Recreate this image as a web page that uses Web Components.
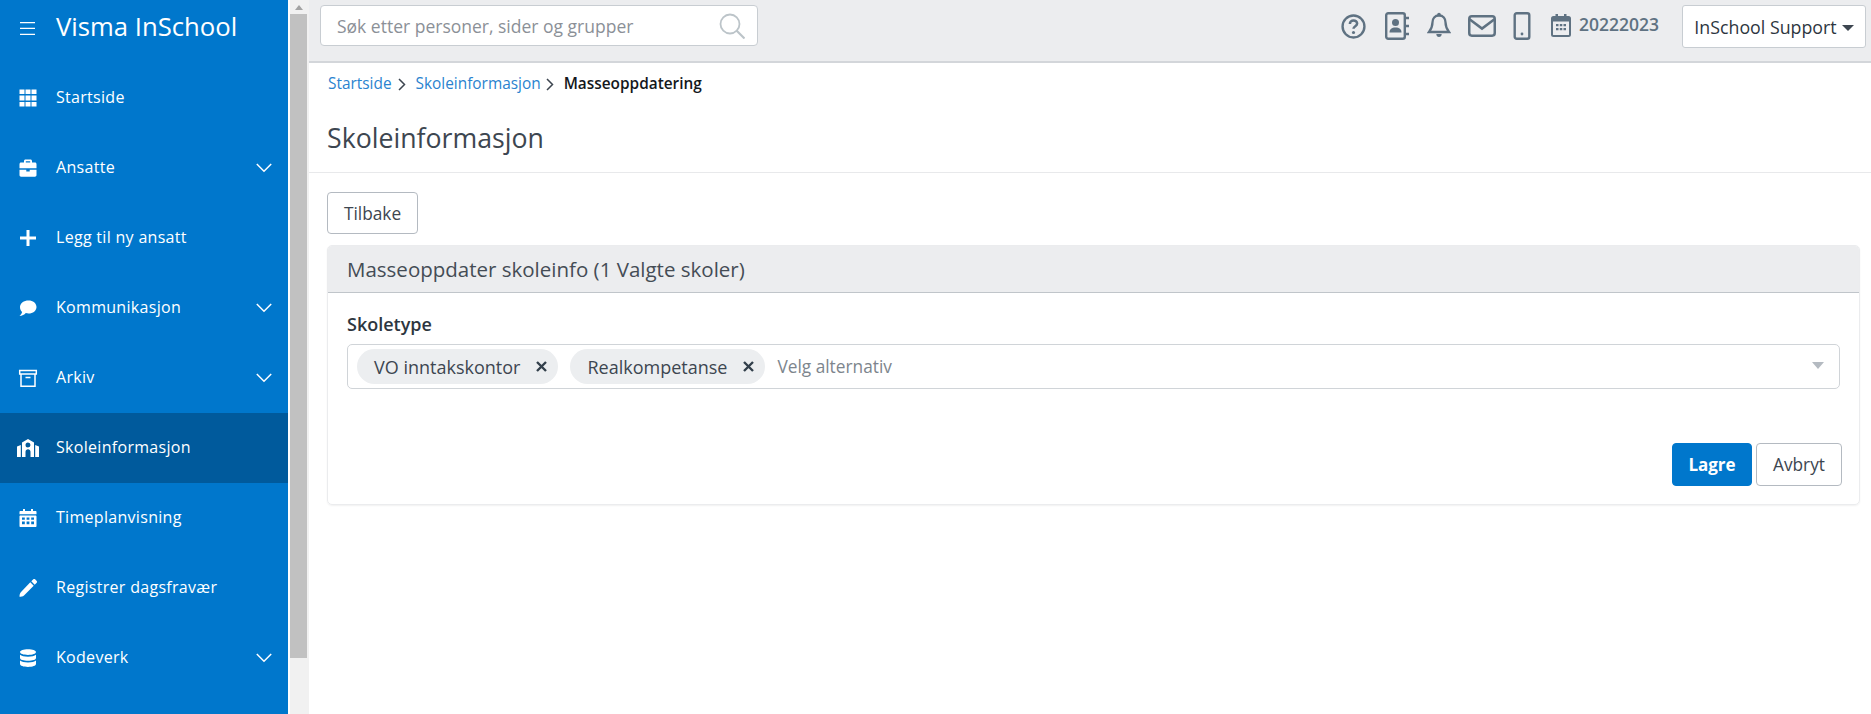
<!DOCTYPE html>
<html lang="no">
<head>
<meta charset="utf-8">
<title>Visma InSchool</title>
<style>
  html, body { margin: 0; height: 100%; overflow: hidden; }
  body { font-family: "Open Sans", "Liberation Sans", sans-serif; color: #3d4650; background: #fff; }
  app-shell { height: 714px; }
</style>
</head>
<body>
<app-shell>
  <side-menu slot="menu">
    <menu-item label="Startside" icon="grid"></menu-item>
    <menu-item label="Ansatte" icon="case" expand></menu-item>
    <menu-item label="Legg til ny ansatt" icon="plus"></menu-item>
    <menu-item label="Kommunikasjon" icon="chat" expand></menu-item>
    <menu-item label="Arkiv" icon="archive" expand></menu-item>
    <menu-item label="Skoleinformasjon" icon="school" active></menu-item>
    <menu-item label="Timeplanvisning" icon="cal"></menu-item>
    <menu-item label="Registrer dagsfravær" icon="pencil"></menu-item>
    <menu-item label="Kodeverk" icon="db" expand></menu-item>
  </side-menu>
  <fake-scrollbar slot="scroll"></fake-scrollbar>
  <top-bar slot="top"></top-bar>
  <page-head slot="head"></page-head>
  <mass-card slot="body"></mass-card>
</app-shell>

<script>
// icons for the side menu, 24 box
const menuIcons = {
  grid: `<path fill="#fff" d="M3.500 3.500h5v4.600h-5zM9.500 3.500h5v4.600h-5zM15.500 3.500h5v4.600h-5zM3.500 9.600h5v4.800h-5zM9.500 9.600h5v4.800h-5zM15.500 9.600h5v4.800h-5zM3.500 16h5v4.600h-5zM9.500 16h5v4.600h-5zM15.500 16h5v4.600h-5z"/>`,
  case: `<path fill="#fff" fill-rule="evenodd" d="M8 6.500V5c0-.8.7-1.500 1.500-1.500h5c.8 0 1.500.7 1.500 1.500v1.500h3C19.800 6.500 20.500 7.200 20.500 8.200V12.300h-17V8.200C3.500 7.200 4.200 6.500 5 6.500zM9.800 6.500h4.400V5.200H9.800zM3.500 13.700h6.800v1.800h3.400v-1.800h6.800V19c0 1-.7 1.700-1.600 1.700H5.100C4.200 20.700 3.500 20 3.500 19z"/>`,
  plus: `<path fill="#fff" d="M10.500 4h3v6.500H20v3h-6.500V20h-3v-6.500H4v-3h6.500z"/>`,
  chat: `<path fill="#fff" d="M12.500 4.500C17 4.500 20.500 7.200 20.500 11s-3.500 6.500-8 6.500c-.9 0-1.800-.1-2.700-.4C8.400 18.700 6 20 3.500 20c1-.8 2.200-2.200 2.600-4C4.700 14.800 4 13 4 11c0-3.800 4-6.500 8.500-6.500z"/>`,
  archive: `<path fill="none" stroke="#fff" stroke-width="1.500" d="M3.700 4.500h16.600v3.600H3.700zM5 8.100v12.100h14V8.100M9.500 11.600h5"/>`,
  school: `<path fill="#fff" fill-rule="evenodd" d="M12 3l6 3.500V21h-3.500v-5.300c0-1.400-1.100-2.500-2.500-2.500s-2.500 1.100-2.500 2.500V21H6V6.500zM12 6.500a2.500 2.500 0 1 0 0 5 2.500 2.500 0 0 0 0-5zM1 10.500l3.800-1.500v12H1zM23 10.500L19.200 9v12H23z"/>`,
  cal: `<path fill="#fff" fill-rule="evenodd" d="M7 3h2v2h6V3h2v2h2.500c.6 0 1 .4 1 1v2.300h-17V6c0-.6.4-1 1-1H7zM4.500 9.500h15c.6 0 1 .4 1 1V20c0 .6-.4 1-1 1h-15c-.6 0-1-.4-1-1v-9.500c0-.6.4-1 1-1zM6 11.500v2.200h2.800v-2.200zM10.600 11.500v2.200h2.800v-2.200zM15.200 11.500v2.200H18v-2.200zM6 15.500v2.700h2.800v-2.700zM10.600 15.500v2.700h2.800v-2.700zM15.200 15.500v2.700H18v-2.700z"/>`,
  pencil: `<path fill="#fff" d="M17.300 3.300c.6-.5 1.300-.5 1.800 0l1.600 1.600c.5.500.5 1.200 0 1.800l-2 2-3.400-3.400zM14.300 6.300l3.400 3.400L8 19.400c-1.200 1-2.900 1.300-4.500 1.300 0-1.600.3-3.300 1.300-4.500z"/>`,
  db: `<path fill="#fff" d="M12 3.300c4.500 0 8 1.100 8 2.800s-3.500 2.900-8 2.900-8-1.200-8-2.900S7.500 3.300 12 3.300zM4 8.700c1.300 1.300 4.400 2 8 2s6.700-.7 8-2V12c0 1.700-3.500 2.800-8 2.800S4 13.700 4 12zM4 14.500c1.300 1.300 4.400 2 8 2s6.700-.7 8-2V18c0 1.700-3.500 2.900-8 2.900S4 19.700 4 18z"/>`
};

class AppShell extends HTMLElement {
  constructor() {
    super();
    this.attachShadow({ mode: "open" }).innerHTML = `
      <style>
        :host { display: grid; grid-template-columns: 288px 21px 1fr; grid-template-rows: auto auto 1fr; width: 1871px; }
        ::slotted([slot=menu]) { grid-row: 1 / 4; grid-column: 1; }
        ::slotted([slot=scroll]) { grid-row: 1 / 4; grid-column: 2; }
        ::slotted([slot=top]) { grid-column: 3; grid-row: 1; }
        ::slotted([slot=head]) { grid-column: 3; grid-row: 2; }
        ::slotted([slot=body]) { grid-column: 3; grid-row: 3; }
      </style>
      <slot name="menu"></slot><slot name="scroll"></slot><slot name="top"></slot><slot name="head"></slot><slot name="body"></slot>`;
  }
}

class SideMenu extends HTMLElement {
  constructor() {
    super();
    this.attachShadow({ mode: "open" }).innerHTML = `
      <style>
        :host { display: block; background: #0077cc; color: #fff; overflow: hidden; }
        header { height: 63px; display: flex; align-items: center; box-sizing: border-box; padding: 0 0 8px 20px; }
        svg { width: 15px; height: 13px; margin: 1px 21px 0 0; }
        h1 { margin: 0 0 2px; font-size: 25.700px; font-weight: 400; line-height: 30px; }
      </style>
      <header>
        <svg viewBox="0 0 15 13"><path fill="#fff" d="M0 0h15v1.300H0zM0 5.800h15v1.300H0zM0 11.700h15V13H0z"/></svg>
        <h1>Visma InSchool</h1>
      </header>
      <slot></slot>`;
  }
}

class MenuItem extends HTMLElement {
  constructor() {
    super();
    this.attachShadow({ mode: "open" });
  }
  connectedCallback() {
    const icon = menuIcons[this.getAttribute("icon")];
    const chev = this.hasAttribute("expand")
      ? `<svg class="chev" viewBox="0 0 16 10"><path fill="none" stroke="#fff" stroke-width="1.500" d="M.8 1l7.200 7.200L15.200 1"/></svg>` : "";
    this.shadowRoot.innerHTML = `
      <style>
        :host { display: flex; align-items: center; height: 70px; box-sizing: border-box; padding: 0 16px 0 15.500px; font-size: 16px; font-weight: 500; letter-spacing: .3px; color: #fff; }
        :host([active]) { background: #005a9c; }
        .ic { width: 24px; height: 24px; margin-right: 16.500px; flex: none; }
        span { flex: 1; line-height: 20px; position: relative; top: -1px; }
        .chev { width: 16px; height: 10px; flex: none; }
      </style>
      <svg class="ic" viewBox="0 0 24 24">${icon}</svg><span>${this.getAttribute("label")}</span>${chev}`;
  }
}

class FakeScrollbar extends HTMLElement {
  constructor() {
    super();
    this.attachShadow({ mode: "open" }).innerHTML = `
      <style>
        :host { display: flex; flex-direction: column; background: #f1f1f1; border-left: 2px solid #fff; box-sizing: border-box; padding-right: 2px; height: 714px; }
        .arrow { height: 14px; display: flex; align-items: center; justify-content: center; }
        .arrow i { width: 0; height: 0; border: 4px solid transparent; border-top: 0; border-bottom: 5px solid #a3a3a3; }
        .thumb { height: 644px; background: #c1c1c1; }
      </style>
      <div class="arrow"><i></i></div><div class="thumb"></div>`;
  }
}

class TopBar extends HTMLElement {
  constructor() {
    super();
    const ic = "#5f7282";
    this.attachShadow({ mode: "open" }).innerHTML = `
      <style>
        :host { display: flex; align-items: flex-start; height: 63px; box-sizing: border-box; background: #ecedef; border-bottom: 2px solid #d3d6da; padding: 5px 5px 0 11px; }
        .search { width: 438px; height: 41px; box-sizing: border-box; border: 1px solid #c8cdd2; border-radius: 4px; background: #fff; display: flex; align-items: center; justify-content: space-between; padding: 0 12px 0 16px; color: #8b9097; font-size: 17.500px; }
        .tools { margin-left: auto; display: flex; align-items: center; height: 42px; color: ${ic}; }
        .tools svg { display: block; flex: none; }
        .year { font-size: 17.500px; font-weight: 600; margin: 0 23px 4px 8px; }
        .user { width: 184px; height: 43px; box-sizing: border-box; border: 1px solid #c8cdd2; border-radius: 3px; background: #fff; display: flex; align-items: center; justify-content: center; gap: 5px; color: #2d3640; font-size: 17.800px; font-weight: 500; }
        .user i { width: 0; height: 0; border: 6px solid transparent; border-top: 6px solid #3d4650; border-bottom: 0; margin-top: 2px; }
      </style>
      <div class="search"><span>Søk etter personer, sider og grupper</span>
        <svg width="26" height="26" viewBox="0 0 26 26"><circle cx="11" cy="11" r="9.500" fill="none" stroke="#bcc4c9" stroke-width="1.800"/><path stroke="#bcc4c9" stroke-width="2.200" d="M17.500 17.500l8 8"/></svg>
      </div>
      <div class="tools">
        <svg width="25" height="25" viewBox="0 0 24 24" style="margin-right:19px"><circle cx="12" cy="12" r="10.500" fill="none" stroke="${ic}" stroke-width="2.300"/><path fill="none" stroke="${ic}" stroke-width="2.400" d="M8.500 9.500c0-2 1.600-3.300 3.500-3.300s3.500 1.200 3.500 3c0 2.600-3.500 2.500-3.500 5"/><circle cx="12" cy="17.700" r="1.500" fill="${ic}"/></svg>
        <svg width="24" height="28" viewBox="0 0 24 28" style="margin-right:18px"><rect x="1.200" y="1.200" width="18.600" height="25.600" rx="2" fill="none" stroke="${ic}" stroke-width="2.400"/><circle cx="10.500" cy="10.500" r="3.500" fill="${ic}"/><path fill="${ic}" d="M4.500 20.500c0-3.300 2.200-5 6-5s6 1.700 6 5z"/><path stroke="${ic}" stroke-width="2.400" d="M21 6h3M21 14h3M21 22h3"/></svg>
        <svg width="24" height="28" viewBox="0 0 24 28" style="margin-right:17px"><path fill="none" stroke="${ic}" stroke-width="2.300" d="M12 3.500c-4.200 0-6.500 3-6.500 6.800 0 5-1.500 7-3.500 9.700h20c-2-2.700-3.500-4.700-3.500-9.700 0-3.800-2.300-6.800-6.500-6.800z"/><circle cx="12" cy="2.500" r="1.800" fill="${ic}"/><path fill="${ic}" d="M9.300 22h5.400c0 1.800-1.200 3-2.700 3s-2.700-1.200-2.700-3z"/></svg>
        <svg width="28" height="22" viewBox="0 0 27 21" style="margin-right:17px"><rect x="1.200" y="1.200" width="24.600" height="18.600" rx="2.500" fill="none" stroke="${ic}" stroke-width="2.400"/><path fill="none" stroke="${ic}" stroke-width="2.400" d="M1.500 4l12 9 12-9"/></svg>
        <svg width="18" height="28" viewBox="0 0 17 28" style="margin-right:20px"><rect x="1.200" y="1.200" width="14.600" height="25.600" rx="2" fill="none" stroke="${ic}" stroke-width="2.400"/><circle cx="8.500" cy="22" r="1.400" fill="${ic}"/></svg>
        <svg width="20" height="24" viewBox="0 0 20 24" style="margin-bottom:2px"><rect x="1" y="4" width="18" height="19" rx="1.500" fill="none" stroke="${ic}" stroke-width="2"/><path fill="${ic}" d="M1 4h18v4.500H1zM4.500 1h2.500v4H4.500zM13 1h2.500v4H13zM5 11h2.500v2.200H5zM8.800 11h2.500v2.200H8.800zM12.500 11H15v2.200h-2.500zM5 15h2.500v2.200H5zM8.800 15h2.500v2.200H8.800zM12.500 15H15v2.200h-2.500z"/></svg>
        <span class="year">20222023</span>
      </div>
      <div class="user"><span>InSchool Support</span><i></i></div>`;
  }
}

class PageHead extends HTMLElement {
  constructor() {
    super();
    this.attachShadow({ mode: "open" }).innerHTML = `
      <style>
        :host { display: block; height: 110px; box-sizing: border-box; border-bottom: 1px solid #e8e9eb; padding: 11px 18px 0; }
        nav { display: flex; align-items: center; font-size: 15.400px; line-height: 20px; padding-left: 1px; }
        a { color: #2a83cf; text-decoration: none; }
        b { font-weight: 600; color: #14181c; }
        svg { width: 8px; height: 13px; margin: 0 10px 0 6px; }
        h2 { margin: 26px 0 0; font-size: 26.700px; font-weight: 400; line-height: 36px; color: #3d4650; }
      </style>
      <nav>
        <a>Startside</a><svg viewBox="0 0 8 13"><path fill="none" stroke="#3d4650" stroke-width="1.500" d="M1 1l5.500 5.500L1 12"/></svg>
        <a>Skoleinformasjon</a><svg viewBox="0 0 8 13" style="margin:0 10px 0 5px"><path fill="none" stroke="#3d4650" stroke-width="1.500" d="M1 1l5.500 5.500L1 12"/></svg>
        <b>Masseoppdatering</b>
      </nav>
      <h2>Skoleinformasjon</h2>`;
  }
}

class VButton extends HTMLElement {
  constructor() {
    super();
    this.attachShadow({ mode: "open" }).innerHTML = `
      <style>
        :host { display: inline-flex; align-items: center; justify-content: center; box-sizing: border-box; height: 43px; padding: 0 14px; border: 1px solid #b4bac1; border-radius: 4px; background: #fff; color: #3d4650; font-size: 17.300px; }
        :host([primary]) { background: #0077cc; border-color: #0077cc; color: #fff; font-weight: 700; font-size: 17px; }
      </style>
      <slot></slot>`;
  }
}

class TagChip extends HTMLElement {
  constructor() {
    super();
    this.attachShadow({ mode: "open" }).innerHTML = `
      <style>
        :host { display: inline-flex; align-items: center; height: 35px; box-sizing: border-box; padding: 0 11px 0 17px; border-radius: 18px; background: #eceef0; color: #3d4650; font-size: 18px; }
        svg { width: 11px; height: 11px; margin-left: 16px; }
      </style>
      <slot></slot><svg viewBox="0 0 11 11"><path stroke="#33404c" stroke-width="2.400" d="M1 1l9 9M10 1l-9 9"/></svg>`;
  }
}

class MassCard extends HTMLElement {
  constructor() {
    super();
    this.attachShadow({ mode: "open" }).innerHTML = `
      <style>
        :host { display: block; padding: 19px 11px 0 18px; }
        .card { margin-top: 11px; height: 260px; box-sizing: border-box; border: 1px solid #ebecee; border-radius: 5px; box-shadow: 0 1px 2px rgba(0,0,0,.06); }
        .head { height: 47px; box-sizing: border-box; background: #ecedef; border-bottom: 1px solid #c0c5ca; border-radius: 4px 4px 0 0; padding: 0 19px 1px; display: flex; align-items: center; font-size: 20.500px; color: #444c55; }
        .body { padding: 19px 19px 0 19px; }
        label { display: block; font-size: 18px; font-weight: 600; line-height: 24px; color: #2d3640; }
        .select { margin-top: 8px; height: 45px; box-sizing: border-box; border: 1px solid #d0d4d8; border-radius: 5px; display: flex; align-items: center; padding: 0 15px 0 9px; }
        tag-chip { margin-right: 12px; }
        .ph { color: #7d858d; font-size: 17.300px; flex: 1; }
        .caret { width: 0; height: 0; border: 6px solid transparent; border-top: 7px solid #b4bac1; border-bottom: 0; margin-bottom: 3px; }
        .actions { display: flex; justify-content: flex-end; gap: 4px; margin-top: 54px; margin-right: -2px; }
      </style>
      <v-button style="width:91px;height:42px">Tilbake</v-button>
      <div class="card">
        <div class="head">Masseoppdater skoleinfo (1 Valgte skoler)</div>
        <div class="body">
          <label>Skoletype</label>
          <div class="select">
            <tag-chip>VO inntakskontor</tag-chip><tag-chip>Realkompetanse</tag-chip>
            <span class="ph">Velg alternativ</span><i class="caret"></i>
          </div>
          <div class="actions">
            <v-button primary style="width:80px">Lagre</v-button>
            <v-button style="width:86px">Avbryt</v-button>
          </div>
        </div>
      </div>`;
  }
}

customElements.define("app-shell", AppShell);
customElements.define("side-menu", SideMenu);
customElements.define("menu-item", MenuItem);
customElements.define("fake-scrollbar", FakeScrollbar);
customElements.define("top-bar", TopBar);
customElements.define("page-head", PageHead);
customElements.define("v-button", VButton);
customElements.define("tag-chip", TagChip);
customElements.define("mass-card", MassCard);
</script>
</body>
</html>
